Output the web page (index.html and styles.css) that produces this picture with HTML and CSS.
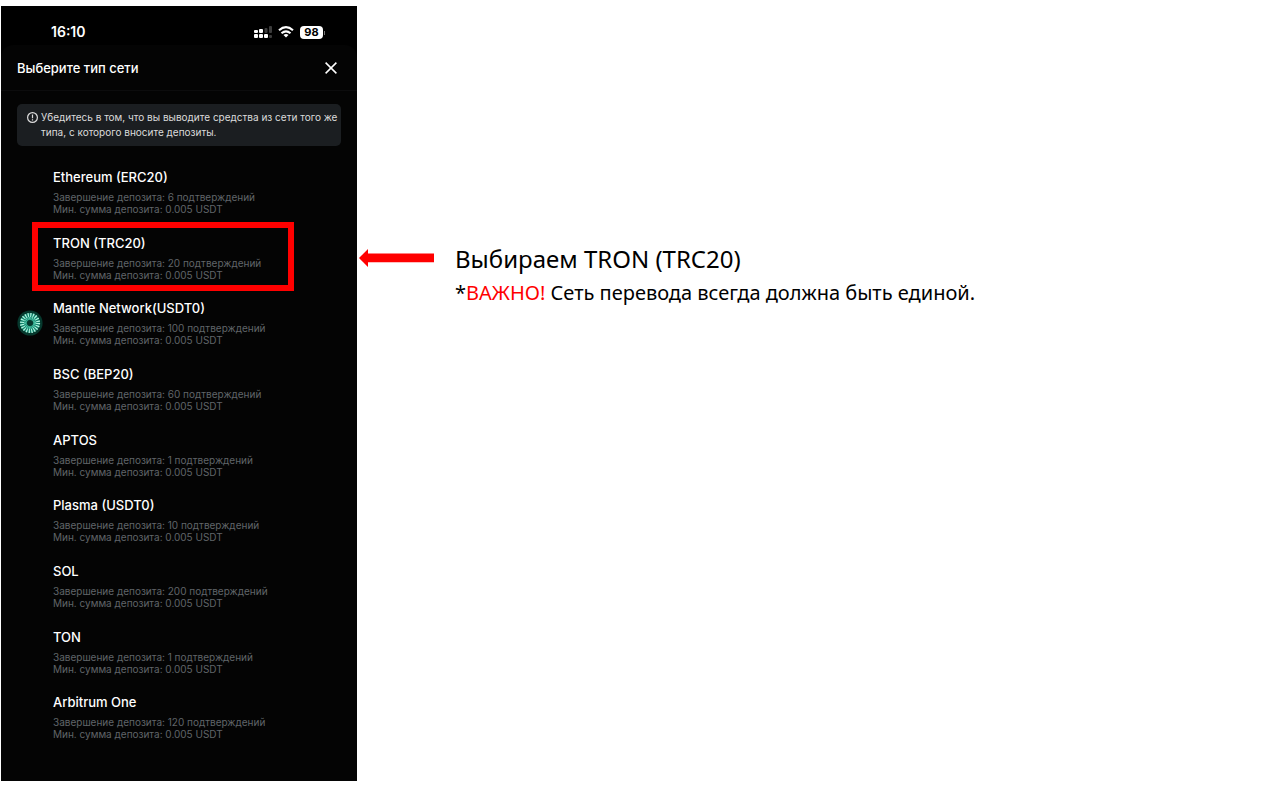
FILE: index.html
```html
<!DOCTYPE html>
<html lang="ru">
<head>
<meta charset="utf-8">
<title>Выберите тип сети</title>
<link rel="stylesheet" href="styles.css">
</head>
<body>
<div class="slide">
  <section class="phone">
    <div class="status">
      <span class="clock">16:10</span>
      <div class="indicators">
        <svg class="signal" width="18" height="14" viewBox="0 0 18 14">
          <g fill="#fff"><rect x="0" y="5" width="4" height="3" rx="1"/><rect x="5" y="4" width="4" height="4" rx="1"/><rect x="0" y="9" width="4" height="4" rx="1"/><rect x="5" y="9" width="4" height="4" rx="1"/><rect x="10" y="9" width="4" height="4" rx="1"/></g>
          <g fill="#3c3c3c"><rect x="10.500" y="3" width="3" height="5" rx="1"/><rect x="15" y="1" width="3" height="7" rx="1"/><rect x="15" y="10" width="3" height="3" rx="1"/></g>
        </svg>
        <svg class="wifi" width="16" height="12" viewBox="0 0 16 12">
          <g fill="none" stroke="#fff" stroke-width="2.1"><path d="M1 4.3Q8-1.9 15 4.3"/><path d="M3.5 7.2Q8 3.4 12.5 7.2"/></g>
          <path fill="#fff" d="M8 11.6 5.5 9Q8 7.100 10.500 9Z"/>
        </svg>
        <span class="battery">98</span>
      </div>
    </div>
    <div class="sheet">
      <header class="sheet-head">
        <h1 class="title">Выберите тип сети</h1>
        <button class="close" aria-label="Закрыть">
          <svg width="12" height="12" viewBox="0 0 12 12"><path d="M.6.6 11.400 11.400M11.400.6.6 11.400" stroke="#fff" stroke-width="1.500"/></svg>
        </button>
      </header>
      <div class="notice">
        <svg class="notice-icon" width="11" height="11" viewBox="0 0 11 11"><circle cx="5.500" cy="5.500" r="4.900" fill="none" stroke="#dcdcdc" stroke-width="1.200"/><path d="M5.500 2.500V6.200M5.500 7.300V8.500" stroke="#dcdcdc" stroke-width="1.200"/></svg>
        <p class="notice-text">Убедитесь в том, что вы выводите средства из сети того же типа, с которого вносите депозиты.</p>
      </div>
      <ul class="networks">
        <li class="item"><button class="network"><span class="coin"></span><span class="info"><span class="name">Ethereum (ERC20)</span><span class="meta">Завершение депозита: 6 подтверждений</span><span class="meta">Мин. сумма депозита: 0.005 USDT</span></span></button></li>
        <li class="item marked"><button class="network"><span class="coin"></span><span class="info"><span class="name">TRON (TRC20)</span><span class="meta">Завершение депозита: 20 подтверждений</span><span class="meta">Мин. сумма депозита: 0.005 USDT</span></span></button></li>
        <li class="item"><button class="network"><span class="coin">
          <svg width="26" height="26" viewBox="-13 -13 26 26">
            <circle r="12.600" fill="#06382d"/>
            <circle r="6.500" fill="none" stroke="#12806a" stroke-width="7"/>
            <circle r="8" fill="none" stroke="#b4f7e2" stroke-width="4.200" stroke-dasharray="1.150 1.364"/>
            <circle r="4.700" fill="none" stroke="#5cd0b2" stroke-width="2.600" stroke-dasharray=".8 .676"/>
          </svg></span><span class="info"><span class="name">Mantle Network(USDT0)</span><span class="meta">Завершение депозита: 100 подтверждений</span><span class="meta">Мин. сумма депозита: 0.005 USDT</span></span></button></li>
        <li class="item"><button class="network"><span class="coin"></span><span class="info"><span class="name">BSC (BEP20)</span><span class="meta">Завершение депозита: 60 подтверждений</span><span class="meta">Мин. сумма депозита: 0.005 USDT</span></span></button></li>
        <li class="item"><button class="network"><span class="coin"></span><span class="info"><span class="name">APTOS</span><span class="meta">Завершение депозита: 1 подтверждений</span><span class="meta">Мин. сумма депозита: 0.005 USDT</span></span></button></li>
        <li class="item"><button class="network"><span class="coin"></span><span class="info"><span class="name">Plasma (USDT0)</span><span class="meta">Завершение депозита: 10 подтверждений</span><span class="meta">Мин. сумма депозита: 0.005 USDT</span></span></button></li>
        <li class="item"><button class="network"><span class="coin"></span><span class="info"><span class="name">SOL</span><span class="meta">Завершение депозита: 200 подтверждений</span><span class="meta">Мин. сумма депозита: 0.005 USDT</span></span></button></li>
        <li class="item"><button class="network"><span class="coin"></span><span class="info"><span class="name">TON</span><span class="meta">Завершение депозита: 1 подтверждений</span><span class="meta">Мин. сумма депозита: 0.005 USDT</span></span></button></li>
        <li class="item"><button class="network"><span class="coin"></span><span class="info"><span class="name">Arbitrum One</span><span class="meta">Завершение депозита: 120 подтверждений</span><span class="meta">Мин. сумма депозита: 0.005 USDT</span></span></button></li>
      </ul>
    </div>
  </section>
  <aside class="callout">
    <svg class="arrow" width="75" height="18" viewBox="0 0 75 18"><path fill="#f00" d="M0 9 9 0V4.500H75V13.200H9V18Z"/></svg>
    <div class="callout-text">
      <p class="lead">Выбираем TRON (TRC20)</p>
      <p class="remark">*<strong class="warn">ВАЖНО!</strong> Сеть перевода всегда должна быть единой.</p>
    </div>
  </aside>
</div>
</body>
</html>
```
FILE: styles.css
```css
* { box-sizing: border-box; }
body { margin: 0; background: #fff; color: #000; font-family: "Noto Sans", "Open Sans", sans-serif; }
h1, p, ul { margin: 0; padding: 0; }
button { border: 0; padding: 0; background: none; color: inherit; font: inherit; text-align: left; cursor: pointer; }
svg { display: block; flex: none; }

.slide { display: flex; align-items: flex-start; padding: 6px 0 8px 1px; }

.phone { flex: 0 0 356px; background: #000; color: #fff; font-family: Inter, "Liberation Sans", sans-serif; }
.status { display: flex; align-items: center; justify-content: space-between; height: 39px; padding: 13px 34px 0 50px; }
.clock { font-size: 14px; line-height: 18px; font-weight: 600; }
.indicators { display: flex; align-items: center; gap: 6px; }
.battery { position: relative; width: 23px; border-radius: 4px; background: #fff; color: #000; font-size: 11px; line-height: 13px; font-weight: 700; text-align: center; }
.battery::after { content: ""; position: absolute; left: 24px; top: 5px; width: 1px; height: 4px; background: #777; }

.sheet { padding-bottom: 22px; background: #040404; border-radius: 12px 12px 0 0; }
.sheet-head { display: flex; align-items: center; justify-content: space-between; height: 46px; padding: 0 20px 0 16px; border-bottom: 1px solid #0c0c0d; }
.title { font-size: 13px; line-height: 18px; font-weight: 500; }

.notice { display: flex; gap: 3px; margin: 13px 16px 22px; padding: 6px 2px 6px 10px; border-radius: 5px; background: #1b1e21; }
.notice-icon { margin-top: 2px; }
.notice-text { color: #dcdcdc; font-size: 10px; line-height: 15px; }

.networks { display: grid; grid-auto-rows: 1fr; min-height: 591px; padding: 0 16px; list-style: none; }
.item { position: relative; }
.network { display: flex; align-items: center; gap: 10px; width: 100%; }
.coin { flex: 0 0 26px; }
.info { display: flex; flex-direction: column; }
.name { margin-bottom: 5px; font-size: 13px; line-height: 18px; font-weight: 500; }
.meta { color: #606469; font-size: 10px; line-height: 12px; }
.marked::after { content: ""; position: absolute; inset: -12px 47px 8px 15px; border: 6px solid #f00; }

.callout { display: flex; flex: 1; align-items: flex-start; gap: 21px; padding: 236px 16px 0 2px; }
.arrow { margin-top: 7px; }
.lead { font-size: 24px; line-height: 34px; }
.remark { font-size: 20px; line-height: 34px; }
.warn { color: #f00; font-weight: 400; }
```
